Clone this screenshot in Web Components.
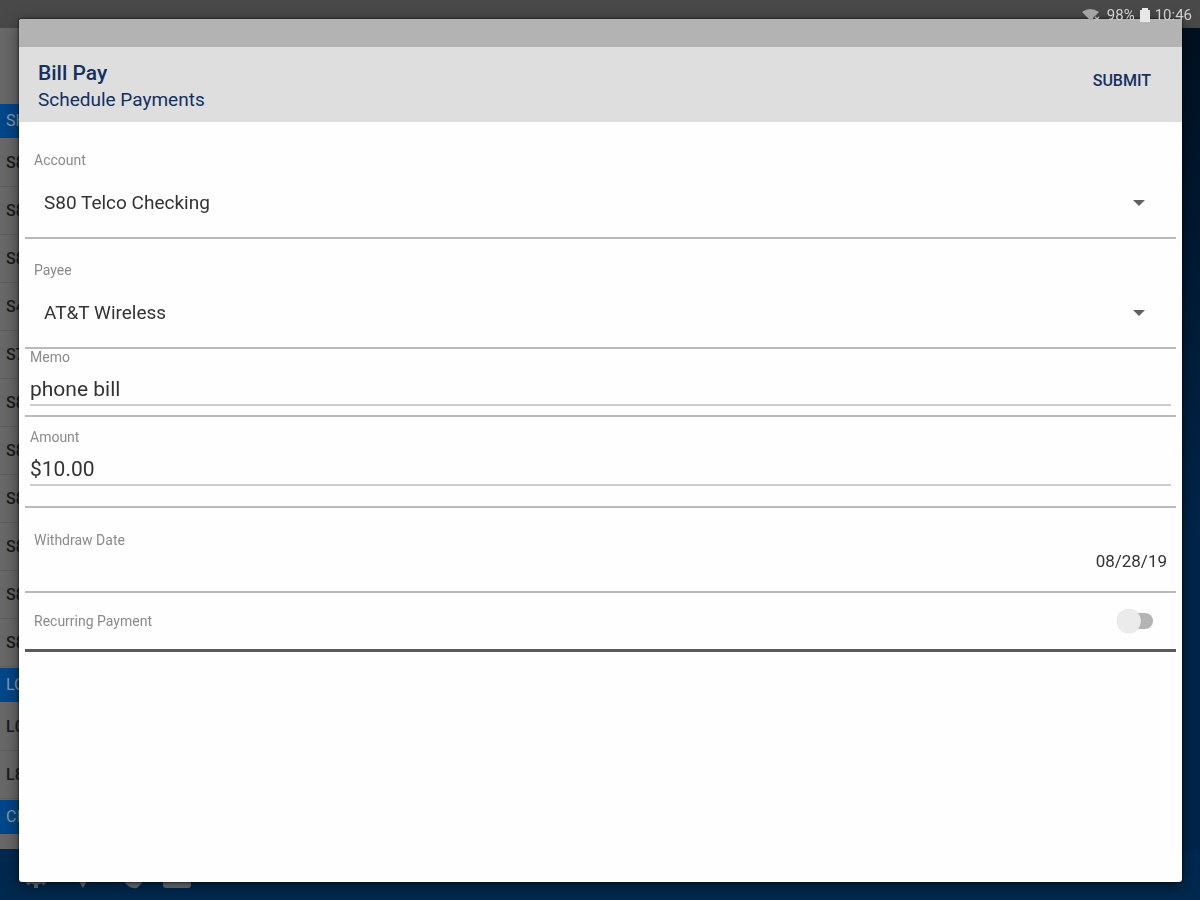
<!DOCTYPE html>
<html lang="en">
<head>
<meta charset="utf-8">
<meta name="viewport" content="width=device-width, initial-scale=1">
<title>Bill Pay</title>
<style>
    body {
        margin: 0;
        min-height: 100vh;
        display: flex;
        flex-direction: column;
        font-family: Roboto, "Liberation Sans", sans-serif;
        background: linear-gradient(#000f1e, #00254a 60%);
        overflow: hidden;
    }
</style>
</head>
<body>
<status-bar battery="98%" time="10:46"></status-bar>
<account-list>
    <account-heading>SH</account-heading>
    <account-item>S8</account-item>
    <account-item>S8</account-item>
    <account-item>S8</account-item>
    <account-item>S4</account-item>
    <account-item>S7</account-item>
    <account-item>S8</account-item>
    <account-item>S8</account-item>
    <account-item>S8</account-item>
    <account-item>S8</account-item>
    <account-item>S8</account-item>
    <account-item>S8</account-item>
    <account-heading>LO</account-heading>
    <account-item>L0</account-item>
    <account-item>L8</account-item>
    <account-heading>CR</account-heading>
</account-list>
<nav-bar></nav-bar>

<pay-dialog>
    <span slot="title">Bill Pay</span>
    <span slot="subtitle">Schedule Payments</span>
    <span slot="action">SUBMIT</span>
    <select-field label="Account" value="S80 Telco Checking"></select-field>
    <select-field label="Payee" value="AT&amp;T Wireless"></select-field>
    <text-field label="Memo" value="phone bill"></text-field>
    <text-field label="Amount" value="$10.00" roomy></text-field>
    <date-field label="Withdraw Date" value="08/28/19"></date-field>
    <switch-field label="Recurring Payment"></switch-field>
</pay-dialog>

<script>
    class StatusBar extends HTMLElement {
        constructor() {
            super();
            const shadow = this.attachShadow({mode: 'open'});
            shadow.innerHTML = `
<style>
    :host {
        display: flex;
        justify-content: flex-end;
        align-items: center;
        gap: 5px;
        box-sizing: border-box;
        height: 28px;
        padding: 1px 8px 0;
        background: #494949;
        color: #d0d0d0;
        font-size: 15px;
        line-height: 26px;
    }
    /* icons and clock stay readable over the dialog */
    svg, span {
        position: relative;
        z-index: 2;
    }
</style>
<svg width="20" height="16" viewBox="0 0 20 16">
    <path d="M0 5Q8 -1 17 5L13 9Q11 10 11 12L9 14Z" fill="#a4a4a4"/>
    <path d="M13 10l4 4M17 10l-4 4" stroke="#bbb" stroke-width="1.5"/>
</svg>
<span>${this.getAttribute('battery')}</span>
<svg width="10" height="16" viewBox="0 0 10 16"><path d="M2 1h6v2h2v12H0V3h2z" fill="#e8e8e8"/></svg>
<span>${this.getAttribute('time')}</span>
    `;
        }
    }

    class AccountList extends HTMLElement {
        constructor() {
            super();
            this.attachShadow({mode: 'open'}).innerHTML = `
<style>
    :host {
        display: flex;
        flex-direction: column;
        flex: 1;
        box-sizing: border-box;
        width: 40%;
        padding-top: 75px;
        background: #686868;
    }
</style>
<slot></slot>
    `;
        }
    }

    class AccountHeading extends HTMLElement {
        constructor() {
            super();
            this.attachShadow({mode: 'open'}).innerHTML = `
<style>
    :host {
        display: block;
        margin: 1px 0;
        padding-left: 6px;
        background: #00478a;
        color: #8c9aa8;
        font-size: 16px;
        line-height: 34px;
    }
</style>
<slot></slot>
    `;
        }
    }

    class AccountItem extends HTMLElement {
        constructor() {
            super();
            this.attachShadow({mode: 'open'}).innerHTML = `
<style>
    :host {
        display: block;
        padding-left: 6px;
        border-bottom: 1px solid #5e5e5e;
        color: #1c1c1c;
        font-size: 16px;
        font-weight: 500;
        line-height: 47px;
    }
</style>
<slot></slot>
    `;
        }
    }

    class NavBar extends HTMLElement {
        constructor() {
            super();
            this.attachShadow({mode: 'open'}).innerHTML = `
<style>
    :host {
        display: flex;
        align-items: center;
        gap: 19px;
        box-sizing: border-box;
        height: 51px;
        padding: 0 22px;
        background: #00294f;
    }
    svg {
        fill: #6b7378;
    }
</style>
<svg width="28" height="28" viewBox="0 0 28 28">
    <circle cx="14" cy="14" r="10"/>
    <path d="M14 1v26M1 14h26M5 5l18 18M23 5L5 23" stroke="#6b7378" stroke-width="4"/>
</svg>
<svg width="28" height="28" viewBox="0 0 28 28"><path d="M14 27C9 18 6 15 6 10a8 8 0 0 1 16 0c0 5-3 8-8 17z"/></svg>
<svg width="28" height="28" viewBox="0 0 28 28"><path d="M4 3l6-2 3 8-3 3q2 5 6 7l4-3 6 6-5 5C12 29 3 18 4 3z"/></svg>
<svg width="28" height="28" viewBox="0 0 28 28"><rect y="4" width="28" height="23" rx="3"/></svg>
    `;
        }
    }

    class PayDialog extends HTMLElement {
        constructor() {
            super();
            this.attachShadow({mode: 'open'}).innerHTML = `
<style>
    :host {
        position: fixed;
        inset: 19px 18px 18px 19px;
        z-index: 1;
        display: flex;
        flex-direction: column;
        overflow: hidden;
        border-radius: 3px;
        background: #fefefe;
        box-shadow: 0 0 2px 1px rgba(0, 0, 0, 0.4), 0 4px 16px rgba(0, 0, 0, 0.5);
    }
    .strip {
        height: 28px;
        background: #b3b3b3;
    }
    header {
        display: flex;
        justify-content: space-between;
        align-items: flex-start;
        box-sizing: border-box;
        height: 75px;
        padding: 12px 31px 0 19px;
        background: #dedede;
        color: #14305f;
    }
    h1, p {
        margin: 0;
    }
    h1 {
        font-size: 21px;
        font-weight: 500;
        line-height: 28px;
    }
    p {
        font-size: 19px;
        line-height: 26px;
    }
    button {
        margin: 8px 0 0;
        padding: 0;
        border: 0;
        background: none;
        color: inherit;
        font: 500 16px/28px Roboto, "Liberation Sans", sans-serif;
    }
    form {
        padding: 7px 6px;
    }
</style>
<div class="strip"></div>
<header>
    <div>
        <h1><slot name="title"></slot></h1>
        <p><slot name="subtitle"></slot></p>
    </div>
    <button type="submit" form="payment"><slot name="action"></slot></button>
</header>
<form id="payment"><slot></slot></form>
    `;
        }
    }

    // shared by every row of the form
    const fieldStyle = `
    :host {
        display: block;
        box-sizing: border-box;
        border-bottom: 2px solid #bababa;
        color: #333;
    }
    label {
        display: block;
        color: #8a8a8a;
        font-size: 14px;
        line-height: 16px;
    }
    input, select, button {
        box-sizing: border-box;
        margin: 0;
        border: 0;
        border-radius: 0;
        background: none;
        color: inherit;
        font-family: inherit;
        outline: none;
    }`;

    class SelectField extends HTMLElement {
        constructor() {
            super();
            this.attachShadow({mode: 'open'}).innerHTML = `
<style>${fieldStyle}
    :host {
        padding: 23px 9px 19px;
    }
    .box {
        display: grid;
        align-items: center;
        margin-top: 20px;
    }
    select, svg {
        grid-area: 1 / 1;
    }
    select {
        appearance: none;
        width: 100%;
        height: 30px;
        padding: 0 40px 2px 10px;
        font-size: 19px;
    }
    svg {
        justify-self: end;
        margin-right: 22px;
        pointer-events: none;
    }
</style>
<label for="field">${this.getAttribute('label')}</label>
<div class="box">
    <select id="field"><option></option></select>
    <svg width="12" height="6" viewBox="0 0 12 6"><path d="M0 0h12L6 6z" fill="#606060"/></svg>
</div>
    `;
            this.shadowRoot.querySelector('option').textContent = this.getAttribute('value');
        }
    }

    class TextField extends HTMLElement {
        constructor() {
            super();
            this.attachShadow({mode: 'open'}).innerHTML = `
<style>${fieldStyle}
    :host {
        padding: 0 5px 9px;
    }
    :host([roomy]) {
        padding: 12px 5px 20px;
    }
    input {
        display: block;
        width: 100%;
        height: 41px;
        padding: 9px 0 0;
        border-bottom: 2px solid #cdcdcd;
        font-size: 21px;
        line-height: 28px;
    }
</style>
<label for="field">${this.getAttribute('label')}</label>
<input id="field" type="text" value="${this.getAttribute('value')}">
    `;
        }
    }

    class DateField extends HTMLElement {
        constructor() {
            super();
            this.attachShadow({mode: 'open'}).innerHTML = `
<style>${fieldStyle}
    :host {
        display: flex;
        justify-content: space-between;
        padding: 24px 9px 18px;
    }
    button {
        margin-top: 17px;
        padding: 0;
        font-size: 17px;
        line-height: 24px;
    }
</style>
<label for="field">${this.getAttribute('label')}</label>
<button id="field" type="button">${this.getAttribute('value')}</button>
    `;
        }
    }

    class SwitchField extends HTMLElement {
        constructor() {
            super();
            this.attachShadow({mode: 'open'}).innerHTML = `
<style>${fieldStyle}
    :host {
        display: flex;
        justify-content: space-between;
        align-items: center;
        padding: 16px 23px 16px 9px;
        border-bottom: 3px solid #5a5a5a;
    }
    input {
        appearance: none;
        display: grid;
        align-items: center;
        width: 36px;
        height: 24px;
    }
    input::before, input::after {
        content: "";
        grid-area: 1 / 1;
    }
    input::before {
        height: 16px;
        margin-left: 6px;
        border-radius: 8px;
        background: #b4b4b4;
    }
    input::after {
        width: 24px;
        height: 24px;
        border-radius: 50%;
        background: #ebebeb;
        box-shadow: 0 0 1px rgba(0, 0, 0, 0.2);
    }
</style>
<label for="field">${this.getAttribute('label')}</label>
<input id="field" type="checkbox" role="switch">
    `;
        }
    }

    customElements.define('status-bar', StatusBar);
    customElements.define('account-list', AccountList);
    customElements.define('account-heading', AccountHeading);
    customElements.define('account-item', AccountItem);
    customElements.define('nav-bar', NavBar);
    customElements.define('pay-dialog', PayDialog);
    customElements.define('select-field', SelectField);
    customElements.define('text-field', TextField);
    customElements.define('date-field', DateField);
    customElements.define('switch-field', SwitchField);
</script>
</body>
</html>
